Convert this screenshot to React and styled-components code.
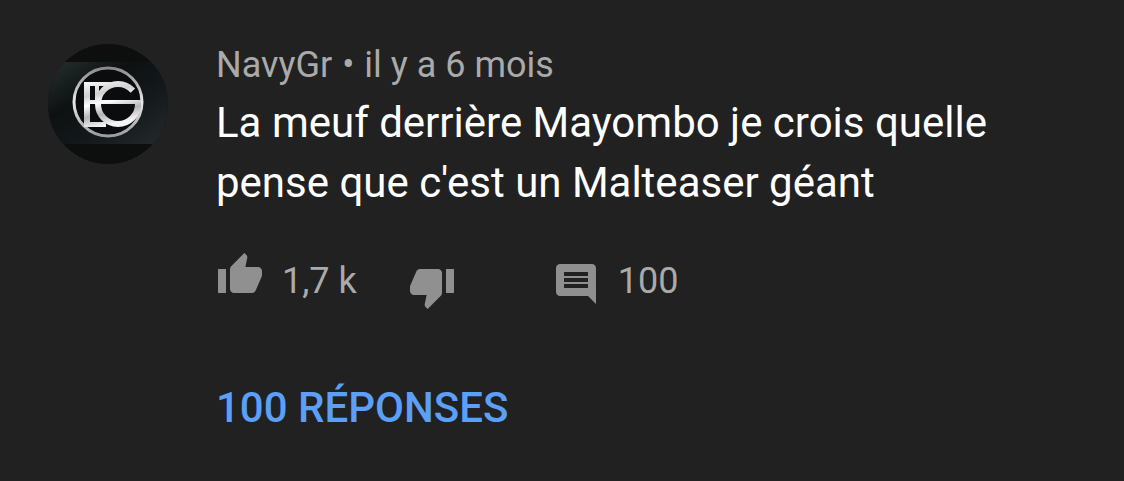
import React from 'react'
import styled, { createGlobalStyle } from 'styled-components'

const comment = {
    author: 'NavyGr',
    date: 'il y a 6 mois',
    text: "La meuf derrière Mayombo je crois quelle pense que c'est un Malteaser géant",
    likes: '1,7 k',
    replies: 100
}

const Avatar = () => (
    <AvatarLink href='#navygr' aria-label={comment.author}>
        <svg viewBox='0 0 120 120' aria-hidden='true'>
            <defs>
                <linearGradient id='backdrop' x1='0' y1='0' x2='1' y2='1'>
                    <stop offset='0' stopColor='#273030' />
                    <stop offset='0.35' stopColor='#0d1112' />
                    <stop offset='0.65' stopColor='#14191b' />
                    <stop offset='1' stopColor='#252c2e' />
                </linearGradient>
                <linearGradient id='silver' gradientUnits='userSpaceOnUse' x1='40' y1='38' x2='50' y2='83'>
                    <stop offset='0' stopColor='#f8f8f8' />
                    <stop offset='0.3' stopColor='#d0d0d0' />
                    <stop offset='0.5' stopColor='#ffffff' />
                    <stop offset='0.75' stopColor='#b4b4b4' />
                    <stop offset='1' stopColor='#f4f4f4' />
                </linearGradient>
                <linearGradient id='ring' x1='0' y1='0' x2='0' y2='1'>
                    <stop offset='0' stopColor='#8a8a8a' />
                    <stop offset='0.5' stopColor='#e8e8e8' />
                    <stop offset='1' stopColor='#9c9c9c' />
                </linearGradient>
            </defs>
            <rect width='120' height='120' fill='#0d0e0e' />
            <rect y='18' width='120' height='82' fill='url(#backdrop)' />
            <circle cx='60' cy='58' r='34' fill='#0a0c0d' stroke='url(#ring)' strokeWidth='3' />
            <g fill='url(#silver)'>
                <rect x='36' y='38' width='6' height='45' />
                <rect x='36' y='38' width='27' height='4' />
                <rect x='47' y='38' width='4' height='20' />
                <rect x='36' y='56' width='57' height='4' />
                <rect x='36' y='78' width='22' height='5' />
            </g>
            <circle
                cx='70'
                cy='60'
                r='20'
                fill='none'
                stroke='url(#silver)'
                strokeWidth='6'
                pathLength='360'
                strokeDasharray='318 42'
            />
        </svg>
    </AvatarLink>
)

const LikeIcon = () => (
    <Icon viewBox='0 0 24 30' aria-hidden='true'>
        <path d='M1 21h4V9H1v12zm22-11c0-1.100-.9-2-2-2h-6.310l.95-4.570.03-.32c0-.41-.17-.79-.44-1.060L14.170 1 7.590 7.590C7.220 7.950 7 8.450 7 9v10c0 1.100.9 2 2 2h9c.83 0 1.540-.5 1.840-1.220l3.020-7.050c.09-.23.14-.47.14-.73v-2z' />
    </Icon>
)

const DislikeIcon = () => (
    <Icon viewBox='0 -6 24 30' aria-hidden='true'>
        <path d='M15 3H6c-.83 0-1.540.5-1.840 1.220l-3.020 7.050c-.09.23-.14.47-.14.73v2c0 1.100.9 2 2 2h6.310l-.95 4.570-.03.32c0 .41.17.79.44 1.060L9.830 23l6.590-6.590c.36-.36.58-.86.58-1.410V5c0-1.100-.9-2-2-2zm4 0v12h4V3h-4z' />
    </Icon>
)

const CommentIcon = () => (
    <Icon viewBox='0 -4.500 24 30' aria-hidden='true'>
        <path d='M21.990 4c0-1.100-.89-2-1.990-2H4c-1.100 0-2 .9-2 2v12c0 1.100.9 2 2 2h14l4 4-.01-18zM18 14H6v-2h12v2zm0-3H6V9h12v2zm0-3H6V6h12v2z' />
    </Icon>
)

const App = () => {

    return(
        <>
            <GlobalStyle />
            <Comment>
                <Avatar />
                <Content>
                    <Meta>
                        <span>{comment.author}</span>
                        <span>•</span>
                        <span>{comment.date}</span>
                    </Meta>
                    <Text>{comment.text}</Text>
                    <Actions>
                        <Action type='button' aria-label="J'aime">
                            <LikeIcon />
                            {comment.likes}
                        </Action>
                        <Action type='button' aria-label="Je n'aime pas" $space={51}>
                            <DislikeIcon />
                        </Action>
                        <Action type='button' aria-label='Répondre' $space={96}>
                            <CommentIcon />
                            {comment.replies}
                        </Action>
                    </Actions>
                    <Replies type='button'>{comment.replies} RÉPONSES</Replies>
                </Content>
            </Comment>
        </>
    )
}

export default App

const GlobalStyle = createGlobalStyle`
    body{
        margin: 0;
        background-color: #212121;
        font-family: Roboto, 'Liberation Sans', sans-serif;
    }
`

const Comment = styled.article`
    display: flex;
    align-items: flex-start;
    gap: 48px;
    padding: 44px 48px;
`

const AvatarLink = styled.a`
    flex: none;
    width: 120px;
    height: 120px;
    border-radius: 50%;
    overflow: hidden;

    svg{
        display: block;
    }
`

const Content = styled.div`
    flex: 1;
    min-width: 0;
    display: flex;
    flex-direction: column;
    align-items: flex-start;
`

const Meta = styled.header`
    display: flex;
    gap: 10px;
    color: #aaaaaa;
    font-size: 36px;
    line-height: 42px;
`

const Text = styled.p`
    margin: 7px 0 38px;
    color: #ffffff;
    font-size: 42px;
    line-height: 60px;
`

const Actions = styled.div`
    display: flex;
    align-items: center;
`

const Action = styled.button`
    display: flex;
    align-items: center;
    gap: 18px;
    margin: 0 0 0 ${({ $space = 0 }) => $space}px;
    padding: 0;
    border: none;
    background: none;
    color: #aaaaaa;
    font-family: inherit;
    font-size: 36px;
    line-height: 42px;
    cursor: pointer;
`

const Icon = styled.svg`
    width: 48px;
    height: 60px;
    fill: #909090;
`

const Replies = styled.button`
    margin-top: 72px;
    padding: 0;
    border: none;
    background: none;
    color: #5c9ff6;
    font-family: inherit;
    font-size: 42px;
    font-weight: 500;
    line-height: 50px;
    cursor: pointer;
`
